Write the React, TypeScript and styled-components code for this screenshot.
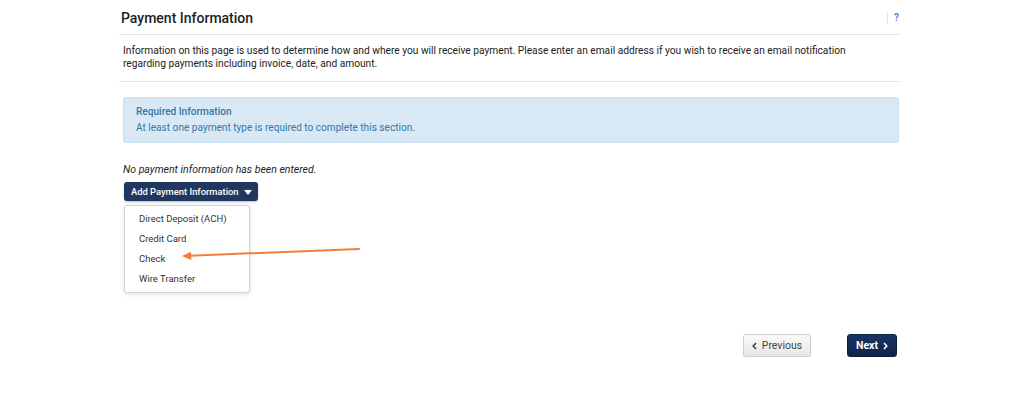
import React from 'react';
import styled, { createGlobalStyle } from 'styled-components';

const GlobalStyle = createGlobalStyle`
    html, body {
        margin: 0;
        padding: 0;
        background: #ffffff;
    }
    body {
        font-family: Roboto, 'Liberation Sans', Arial, sans-serif;
        color: #222222;
        -webkit-font-smoothing: antialiased;
    }
`;

const Page = styled.div`
    width: 781px;
    margin-left: 119px;
    padding-top: 1px;
`;

const Header = styled.div`
    display: flex;
    justify-content: space-between;
    align-items: center;
    height: 33px;
    padding: 0 2px;
    border-bottom: 1px solid #e4e4e4;
`;

const Title = styled.h1`
    margin: 0;
    font-size: 14px;
    font-weight: 500;
    color: #1e1e1e;
`;

const HelpLink = styled.a`
    display: flex;
    align-items: center;
    height: 12px;
    padding-left: 6px;
    margin-right: -1px;
    border-left: 1px solid #e3e3e3;
    font-size: 10px;
    font-weight: 700;
    color: #4d7fd6;
    text-decoration: none;
    cursor: pointer;
`;

const Description = styled.p`
    margin: 0;
    padding: 9px 50px 11px 4px;
    font-size: 10.2px;
    line-height: 13px;
    color: #222222;
    border-bottom: 1px solid #e4e4e4;
`;

const Body = styled.div`
    padding: 0 1px 0 4px;
`;

const Alert = styled.div`
    margin-top: 15px;
    padding: 6px 12px 6px;
    background: #d9e8f5;
    border: 1px solid #c7e0f2;
    border-radius: 3px;
    font-size: 10.1px;
    line-height: 16px;
    color: #3478a6;
`;

const AlertTitle = styled.div`
    font-weight: 500;
`;

const EmptyNote = styled.p`
    margin: 20px 0 5px 0;
    font-size: 10.5px;
    line-height: 14px;
    font-style: italic;
    color: #1e1e1e;
`;

const DropdownArea = styled.div`
    position: relative;
    height: 152px;
`;

const DropdownButton = styled.button`
    display: flex;
    align-items: center;
    gap: 5px;
    width: fit-content;
    height: 19px;
    padding: 0 6px 0 7px;
    margin-left: 1px;
    border: none;
    border-radius: 3px;
    background: #213760;
    color: #ffffff;
    font-family: inherit;
    font-size: 9.4px;
    font-weight: 500;
    box-shadow: 0 1px 2px rgba(0, 0, 0, 0.25);
    cursor: pointer;
`;

const Caret = styled.span`
    width: 0;
    height: 0;
    border-left: 4px solid transparent;
    border-right: 4px solid transparent;
    border-top: 5px solid #ffffff;
    margin-top: 1px;
`;

const Menu = styled.ul`
    position: absolute;
    top: 23px;
    left: 1px;
    width: 124px;
    margin: 0;
    padding: 3px 0 3px;
    list-style: none;
    background: #ffffff;
    border: 1px solid #d4d4d4;
    border-radius: 3px;
    box-shadow: 0 1px 4px rgba(0, 0, 0, 0.15);
    z-index: 1;
`;

const MenuItem = styled.li`
    padding: 0 14px;
    height: 20px;
    line-height: 20px;
    font-size: 9.5px;
    white-space: nowrap;
    color: #333333;
    cursor: pointer;
    &:hover {
        background: #f2f2f2;
    }
`;

const Annotation = styled.svg`
    position: absolute;
    left: 55px;
    top: 60px;
    overflow: visible;
    z-index: 2;
    pointer-events: none;
`;

const Footer = styled.div`
    display: flex;
    justify-content: flex-end;
    gap: 36px;
    padding-right: 2px;
`;

const NavButton = styled.button<{ primary?: boolean; w: number }>`
    display: inline-flex;
    align-items: center;
    justify-content: center;
    gap: 5px;
    width: ${(props) => props.w}px;
    height: 23px;
    padding: 0;
    border-radius: 3px;
    font-family: inherit;
    font-size: 10.5px;
    font-weight: ${(props) => (props.primary ? 700 : 400)};
    color: ${(props) => (props.primary ? '#ffffff' : '#444444')};
    background: ${(props) =>
        props.primary
            ? 'linear-gradient(#1a3563, #0f2449)'
            : 'linear-gradient(#fafafa, #e7e7e7)'};
    border: 1px solid ${(props) => (props.primary ? '#0c1f40' : '#cfcfcf')};
    box-shadow: 0 1px 1px rgba(0, 0, 0, 0.12);
    cursor: pointer;
`;

const Chevron = ({ dir }: { dir: 'left' | 'right' }) => (
    <svg width="5" height="8" viewBox="0 0 5 8">
        <path
            d={dir === 'left' ? 'M4 1 L1.2 4 L4 7' : 'M1 1 L3.8 4 L1 7'}
            fill="none"
            stroke="currentColor"
            strokeWidth="1.6"
        />
    </svg>
);

const paymentTypes = ['Direct Deposit (ACH)', 'Credit Card', 'Check', 'Wire Transfer'];

export default function App() {
    return (
        <>
            <GlobalStyle />
            <Page>
                <Header>
                    <Title>Payment Information</Title>
                    <HelpLink>?</HelpLink>
                </Header>
                <Description>
                    Information on this page is used to determine how and where you will receive
                    payment. Please enter an email address if you wish to receive an email
                    notification regarding payments including invoice, date, and amount.
                </Description>
                <Body>
                    <Alert>
                        <AlertTitle>Required Information</AlertTitle>
                        <div>At least one payment type is required to complete this section.</div>
                    </Alert>
                    <EmptyNote>No payment information has been entered.</EmptyNote>
                    <DropdownArea>
                        <DropdownButton>
                            Add Payment Information
                            <Caret />
                        </DropdownButton>
                        <Menu>
                            {paymentTypes.map((type) => (
                                <MenuItem key={type}>{type}</MenuItem>
                            ))}
                        </Menu>
                        <Annotation width="190" height="20" viewBox="0 0 190 20">
                            <line
                                x1="181"
                                y1="7"
                                x2="12"
                                y2="13.7"
                                stroke="#ef7f3a"
                                strokeWidth="2"
                                strokeLinecap="round"
                            />
                            <path d="M4 14 L13 9.7 L13.4 18 Z" fill="#ef7f3a" />
                        </Annotation>
                    </DropdownArea>
                    <Footer>
                        <NavButton w={68}>
                            <Chevron dir="left" />
                            Previous
                        </NavButton>
                        <NavButton primary w={50}>
                            Next
                            <Chevron dir="right" />
                        </NavButton>
                    </Footer>
                </Body>
            </Page>
        </>
    );
}
